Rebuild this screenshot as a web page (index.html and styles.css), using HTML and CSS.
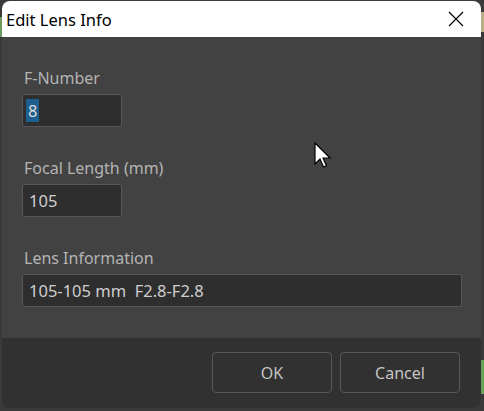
FILE: index.html
```html
<!DOCTYPE html>
<html>
<head>
<meta charset="utf-8">
<link rel="stylesheet" href="styles.css">
</head>
<body>
<div class="window">
  <div class="titlebar">
    <span class="title">Edit Lens Info</span>
    <svg class="close" width="16" height="16" viewBox="0 0 16 16"><path d="M1 1 L15 15 M15 1 L1 15" stroke="#000" stroke-width="1.2" fill="none"/></svg>
  </div>
  <div class="content">
    <div class="field">
      <label class="label">F-Number</label>
      <div class="input short"><span class="sel">8</span></div>
    </div>
    <div class="field">
      <label class="label">Focal Length (mm)</label>
      <div class="input short">105</div>
    </div>
    <div class="field">
      <label class="label">Lens Information</label>
      <div class="input wide">105-105 mm&nbsp;&nbsp;F2.8-F2.8</div>
    </div>
  </div>
  <div class="footer">
    <button class="btn">OK</button>
    <button class="btn">Cancel</button>
  </div>
</div>
<svg class="cursor" width="20" height="30" viewBox="0 0 20 30"><path d="M1 1 L1 22 L6 17 L9.5 25 L12.5 23.7 L9 16 L16 16 Z" fill="#fff" stroke="#000" stroke-width="1.2" stroke-linejoin="miter"/></svg>
</body>
</html>
```
FILE: styles.css
```css
html, body {
  margin: 0;
  padding: 0;
}
body {
  width: 484px;
  height: 411px;
  background-color: #3a3a3a;
  background-image:
    linear-gradient(#6c9a5c, #6c9a5c),
    linear-gradient(#b9b08a, #b9b08a),
    linear-gradient(#6aa35c, #6aa35c);
  background-size: 2px 20px, 3px 20px, 3px 34px;
  background-position: 0 17px, 481px 12px, 481px 360px;
  background-repeat: no-repeat;
  position: relative;
  overflow: hidden;
  font-family: "Noto Sans", "Open Sans", sans-serif;
}
.window {
  margin: 1px 3px 0 2px;
  width: 479px;
  height: 407px;
  border-radius: 8px;
  overflow: hidden;
  display: flex;
  flex-direction: column;
  background: #424242;
}
.titlebar {
  height: 36px;
  flex: none;
  background: #ffffff;
  display: flex;
  align-items: center;
  justify-content: space-between;
  padding: 0 17px 0 4px;
}
.title {
  font-family: "Noto Sans", sans-serif;
  font-size: 16.5px;
  color: #000;
  margin-top: 1px;
}
.close {
  display: block;
}
.content {
  flex: 1;
  background: #424242;
  padding: 31px 20px 0 20px;
  display: flex;
  flex-direction: column;
  gap: 31px;
}
.field {
  display: flex;
  flex-direction: column;
  gap: 5px;
}
.label {
  font-size: 16px;
  line-height: 21px;
  color: #b4b4b4;
  padding-left: 2px;
}
.input {
  height: 33px;
  box-sizing: border-box;
  background: #2e2e2e;
  border: 1px solid #575757;
  border-radius: 2px;
  color: #cfcfcf;
  font-size: 16.5px;
  display: flex;
  align-items: center;
  padding-left: 6px;
}
.input.short {
  width: 100px;
}
.input.wide {
  width: 440px;
}
.sel {
  display: inline-block;
  background: #1d5f8e;
  color: #dcdcdc;
  padding: 0 2px;
  margin-left: -3px;
  height: 23px;
  line-height: 23px;
}
.footer {
  height: 70px;
  flex: none;
  background: #313131;
  display: flex;
  justify-content: flex-end;
  align-items: center;
  gap: 8px;
  padding-right: 21px;
}
.btn {
  width: 120px;
  height: 41px;
  background: #313131;
  border: 1px solid #585858;
  border-radius: 4px;
  color: #c4c4c4;
  font-family: "Noto Sans", sans-serif;
  font-size: 16px;
  margin-top: -1px;
}
.cursor {
  position: absolute;
  left: 314px;
  top: 142px;
}
```
